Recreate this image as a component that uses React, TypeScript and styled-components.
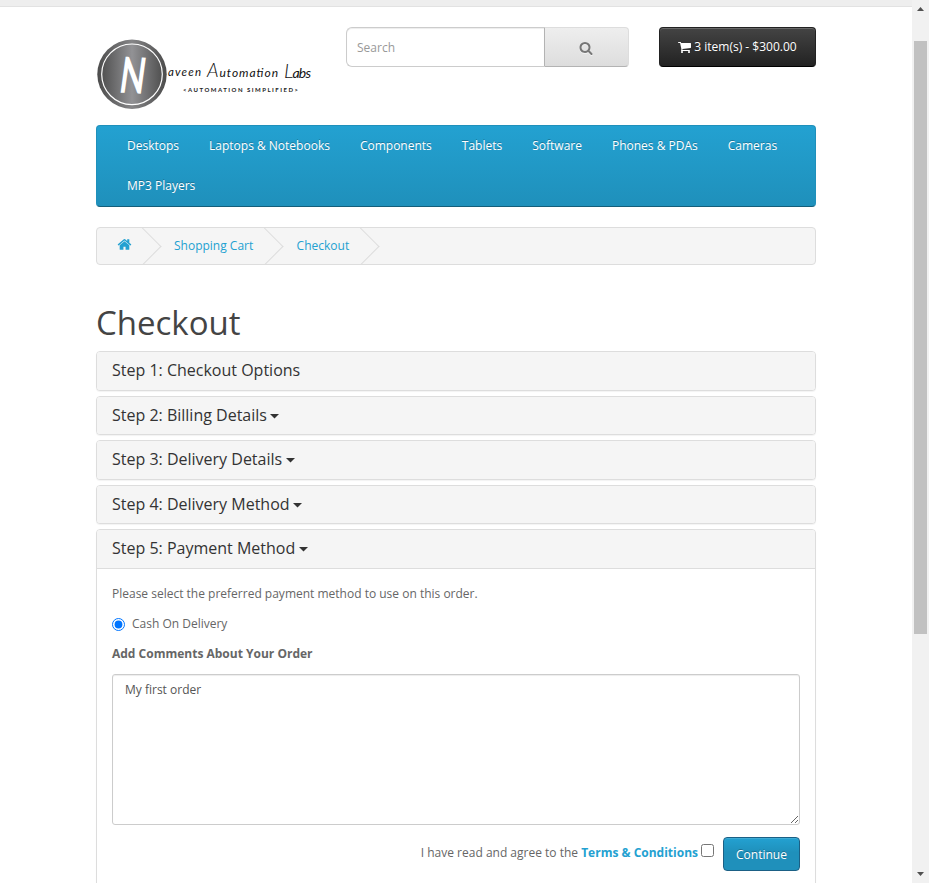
import React from "react";
import styled, { createGlobalStyle } from "styled-components";

const Global = createGlobalStyle`
  * { box-sizing: border-box; }
  html, body { margin: 0; padding: 0; height: 883px; overflow: hidden; background: #fff; }
  body { font: 400 12px/20px "Open Sans", sans-serif; color: #666; }
  a { color: #23a1d1; text-decoration: none; }
`;

const Window = styled.div`
  display: flex;
  width: 929px;
  height: 883px;
  overflow: hidden;
`;
const Page = styled.div`
  flex: 1;
  min-width: 0;
  height: 883px;
  overflow: hidden;
`;
const TopStrip = styled.div`
  height: 7px;
  background: #eee;
  border-bottom: 1px solid #e2e2e2;
`;
const Container = styled.main`
  width: 720px;
  margin-left: 96px;
`;
const Header = styled.header`
  display: flex;
  align-items: flex-start;
  height: 118px;
  padding-top: 20px;
`;
const LogoSlot = styled.div`
  width: 250px;
  padding-top: 11px;
  svg { display: block; }
`;
const Search = styled.form`
  display: flex;
  width: 283px;
  height: 40px;
  margin-right: 30px;
`;
const SearchInput = styled.input`
  width: 199px;
  height: 40px;
  padding: 0 10px;
  border: 1px solid #ccc;
  border-right: 1px solid #b3b3b3;
  border-radius: 6px 0 0 6px;
  box-shadow: inset 0 1px 1px rgba(0, 0, 0, 0.075);
  font: 12px "Open Sans", sans-serif;
  outline: none;
  &::placeholder { color: #999; opacity: 1; }
`;
const SearchButton = styled.button`
  flex: 1;
  display: flex;
  align-items: center;
  justify-content: center;
  padding: 2px 2px 0 0;
  border: 1px solid #ddd;
  border-left: 0;
  border-bottom-color: #b3b3b3;
  border-radius: 0 4px 4px 0;
  background: linear-gradient(#eee, #ddd);
  color: #777;
  svg { filter: drop-shadow(0 1px 0 rgba(255, 255, 255, 0.6)); }
`;
const CartButton = styled.button`
  display: flex;
  align-items: center;
  justify-content: center;
  gap: 2px;
  width: 157px;
  height: 40px;
  padding: 0;
  border: 1px solid;
  border-color: #222 #222 #000;
  border-radius: 4px;
  background: linear-gradient(#444, #222);
  box-shadow: inset 0 1px 0 rgba(255, 255, 255, 0.2);
  color: #fff;
  font: 12px/18px "Open Sans", sans-serif;
  text-shadow: 0 -1px 0 rgba(0, 0, 0, 0.25);
`;
const Nav = styled.nav`
  display: flex;
  flex-wrap: wrap;
  height: 82px;
  padding: 0 15px;
  border: 1px solid;
  border-color: #1f90bb #1f90bb #145e7a;
  border-radius: 4px;
  background: linear-gradient(#23a1d1, #1f90bb);
`;
const NavLink = styled.a`
  && { color: #fff; }
  height: 40px;
  padding: 10px 15px;
  text-shadow: 0 -1px 0 rgba(0, 0, 0, 0.25);
`;
const Breadcrumb = styled.ul`
  display: flex;
  list-style: none;
  height: 38px;
  margin: 20px 0 0;
  padding: 0;
  overflow: hidden;
  border: 1px solid #ddd;
  border-radius: 4px;
  background: #f5f5f5;
`;
const Crumb = styled.li<{ $w: number; $pad: number }>`
  position: relative;
  width: ${(p) => p.$w}px;
  padding: 8px 0 0 ${(p) => p.$pad}px;
  white-space: nowrap;
  &::after {
    content: "";
    position: absolute;
    top: 5px;
    right: 5px;
    width: 26px;
    height: 26px;
    border-right: 1px solid #ddd;
    border-bottom: 1px solid #ddd;
    transform: rotate(-45deg);
  }
  svg { display: block; margin-top: 1px; }
`;
const Title = styled.h1`
  margin: 39px 0 10px;
  font-size: 33px;
  line-height: 37px;
  font-weight: 400;
  color: #444;
`;
const Panel = styled.section<{ $open?: boolean }>`
  margin-bottom: 5px;
  border: 1px solid #ddd;
  border-radius: 4px;
  background: #fff;
  box-shadow: 0 1px 1px rgba(0, 0, 0, 0.05);
  overflow: hidden;
  ${(p) => p.$open && "height: 420px;"}
`;
const PanelHeading = styled.h4<{ $open?: boolean }>`
  margin: 0;
  padding: 10px 15px;
  background: #f5f5f5;
  color: #333;
  font-size: 16px;
  line-height: 17.6px;
  font-weight: 400;
  border-bottom: ${(p) => (p.$open ? "1px solid #ddd" : "0")};
`;
const Caret = styled.svg`
  display: inline-block;
  width: 9px;
  height: 5px;
  margin-left: 3.5px;
  vertical-align: 2px;
  fill: #333;
`;
const PanelBody = styled.div`
  padding: 15px;
`;
const Para = styled.p`
  margin: 0 0 10px;
`;
const RadioLabel = styled.label`
  display: flex;
  margin-bottom: 10px;
  input { width: 13px; height: 13px; margin: 4px 7px 0 0; accent-color: #0075ff; }
`;
const Comments = styled.textarea`
  display: block;
  width: 688px;
  height: 151px;
  padding: 5px 12px;
  border: 1px solid #ccc;
  border-radius: 3px;
  box-shadow: inset 0 1px 1px rgba(0, 0, 0, 0.075);
  color: #555;
  font: 12px/20px "Open Sans", sans-serif;
  resize: vertical;
  outline: none;
`;
const Actions = styled.div`
  display: flex;
  justify-content: flex-end;
  margin-top: 12px;
  line-height: 32px;
  a { font-weight: 700; }
  input { width: 13px; height: 13px; margin: 7px 9px 0 3px; }
`;
const Continue = styled.button`
  width: 77px;
  height: 34px;
  padding: 1px 0 0;
  border: 1px solid #1b6085;
  border-radius: 4px;
  background: linear-gradient(#23a1d1, #1f90bb 45%);
  box-shadow: inset 0 1px 0 rgba(255, 255, 255, 0.12);
  color: #fff;
  font: 12px "Open Sans", sans-serif;
  text-shadow: 0 -1px 0 rgba(0, 0, 0, 0.25);
`;
const Scrollbar = styled.aside`
  display: flex;
  flex-direction: column;
  align-items: center;
  justify-content: space-between;
  width: 17px;
  padding: 7px 0 7px;
  background: #f1f1f1;
  svg { display: block; }
`;
const Thumb = styled.div`
  width: 13px;
  height: 593px;
  margin: 30px 1px 238px 0;
  background: #c1c1c1;
`;

const icons = {
  cart: "M640 1536q0 52-38 90t-90 38-90-38-38-90 38-90 90-38 90 38 38 90zm896 0q0 52-38 90t-90 38-90-38-38-90 38-90 90-38 90 38 38 90zm128-1088v512q0 24-16.500 42.500t-40.500 21.500l-1044 122q13 60 13 70 0 16-24 64h920q26 0 45 19t19 45-19 45-45 19h-1024q-26 0-45-19t-19-45q0-11 8-31.500t16-36 21.500-40 15.500-29.500l-177-823h-204q-26 0-45-19t-19-45 19-45 45-19h256q16 0 28.500 6.500t19.500 15.500 13 24.500 8 26 5.500 29.500 4.500 26h1201q26 0 45 19t19 45z",
  home: "M1472 992v480q0 26-19 45t-45 19h-384v-384h-256v384h-384q-26 0-45-19t-19-45v-480q0-1 .5-3t.5-3l575-474 575 474q1 2 1 6zm223-69l-62 74q-8 9-21 11h-3q-13 0-21-7l-692-577-692 577q-12 8-24 7-13-2-21-11l-62-74q-8-10-7-23.500t11-21.500l719-599q32-26 76-26t76 26l244 204v-195q0-14 9-23t23-9h192q14 0 23 9t9 23v408l219 182q10 8 11 21.500t-7 23.500z",
  search: "M1216 832q0-185-131.500-316.500t-316.500-131.500-316.500 131.500-131.500 316.500 131.500 316.500 316.500 131.500 316.500-131.500 131.500-316.500zm512 832q0 52-38 90t-90 38q-54 0-90-38l-343-342q-179 124-399 124-143 0-273.500-55.500t-225-150-150-225-55.500-273.500 55.500-273.500 150-225 225-150 273.500-55.500 273.500 55.500 225 150 150 225 55.500 273.500q0 220-124 399l343 343q37 37 37 90z",
};

const Icon = ({ name, size }: { name: keyof typeof icons; size: number }) => (
  <svg width={size} height={size} viewBox="0 0 1792 1792" fill="currentColor" overflow="visible">
    <path d={icons[name]} />
  </svg>
);

const Down = () => (
  <Caret viewBox="0 0 9 5"><path d="M0 0H9L4.500 4.500Z" /></Caret>
);

const Logo = () => (
  <svg width="222" height="72" viewBox="0 0 222 72">
    <defs>
      <linearGradient id="disc">
        <stop offset="0" stopColor="#505050" />
        <stop offset="0.5" stopColor="#929295" />
        <stop offset="1" stopColor="#505050" />
      </linearGradient>
      <linearGradient id="rim">
        <stop offset="0" stopColor="#4c4c4c" />
        <stop offset="0.5" stopColor="#858587" />
        <stop offset="1" stopColor="#4c4c4c" />
      </linearGradient>
    </defs>
    <circle cx="36" cy="36.300" r="34.700" fill="url(#rim)" />
    <circle cx="36" cy="36.300" r="30.300" fill="url(#disc)" stroke="#fff" strokeWidth="1.200" />
    <text transform="translate(22 54.500) rotate(3) skewX(-5) scale(.66 1)" fontFamily="Lato" fontSize="50" fontWeight="700" fill="#fff">N</text>
    <g fontFamily="Lato" fontStyle="italic" fontWeight="400" fill="#111">
      <text x="72" y="38" fontSize="11.500" textLength="33" lengthAdjust="spacing">aveen</text>
      <text x="111" y="38.500" fontSize="12" textLength="71" lengthAdjust="spacing"><tspan fontSize="19" fontWeight="300">A</tspan>utomation</text>
      <text x="188" y="40" fontSize="14" textLength="27" lengthAdjust="spacing"><tspan fontSize="20" fontWeight="300">L</tspan>abs</text>
    </g>
    <text x="87" y="53.500" fontFamily="Lato" fontSize="6" fontWeight="700" fill="#222" textLength="115" lengthAdjust="spacing">&lt;AUTOMATION SIMPLIFIED&gt;</text>
  </svg>
);

const navItems = ["Desktops", "Laptops & Notebooks", "Components", "Tablets", "Software", "Phones & PDAs", "Cameras", "MP3 Players"];
const closedSteps = ["Step 1: Checkout Options", "Step 2: Billing Details", "Step 3: Delivery Details", "Step 4: Delivery Method"];

export default function App() {
  return (
    <>
      <Global />
      <Window>
        <Page>
          <TopStrip />
          <Container>
            <Header>
              <LogoSlot><Logo /></LogoSlot>
              <Search>
                <SearchInput placeholder="Search" />
                <SearchButton type="button" aria-label="Search"><Icon name="search" size={14} /></SearchButton>
              </Search>
              <CartButton><Icon name="cart" size={14} /><span>3 item(s) - $300.00</span></CartButton>
            </Header>
            <Nav>{navItems.map((n) => <NavLink key={n} href="#">{n}</NavLink>)}</Nav>
            <Breadcrumb>
              <Crumb $w={64} $pad={19.5}><a href="#" aria-label="Home"><Icon name="home" size={15} /></a></Crumb>
              <Crumb $w={122} $pad={13}><a href="#">Shopping Cart</a></Crumb>
              <Crumb $w={96} $pad={13.6}><a href="#">Checkout</a></Crumb>
            </Breadcrumb>
            <Title>Checkout</Title>
            {closedSteps.map((s, i) => (
              <Panel key={s}><PanelHeading>{s}{i > 0 && <Down />}</PanelHeading></Panel>
            ))}
            <Panel $open>
              <PanelHeading $open>Step 5: Payment Method<Down /></PanelHeading>
              <PanelBody>
                <Para>Please select the preferred payment method to use on this order.</Para>
                <RadioLabel><input type="radio" defaultChecked />Cash On Delivery</RadioLabel>
                <Para><strong>Add Comments About Your Order</strong></Para>
                <Comments defaultValue="My first order" />
                <Actions>
                  <span>I have read and agree to the <a href="#">Terms &amp; Conditions</a></span>
                  <input type="checkbox" aria-label="Agree" />
                  <Continue>Continue</Continue>
                </Actions>
              </PanelBody>
            </Panel>
          </Container>
        </Page>
        <Scrollbar>
          <svg width="7" height="4" viewBox="0 0 7 4"><path d="M3.500 0L7 4H0Z" fill="#505050" /></svg>
          <Thumb />
          <svg width="7" height="4" viewBox="0 0 7 4"><path d="M0 0H7L3.500 4Z" fill="#505050" /></svg>
        </Scrollbar>
      </Window>
    </>
  );
}
